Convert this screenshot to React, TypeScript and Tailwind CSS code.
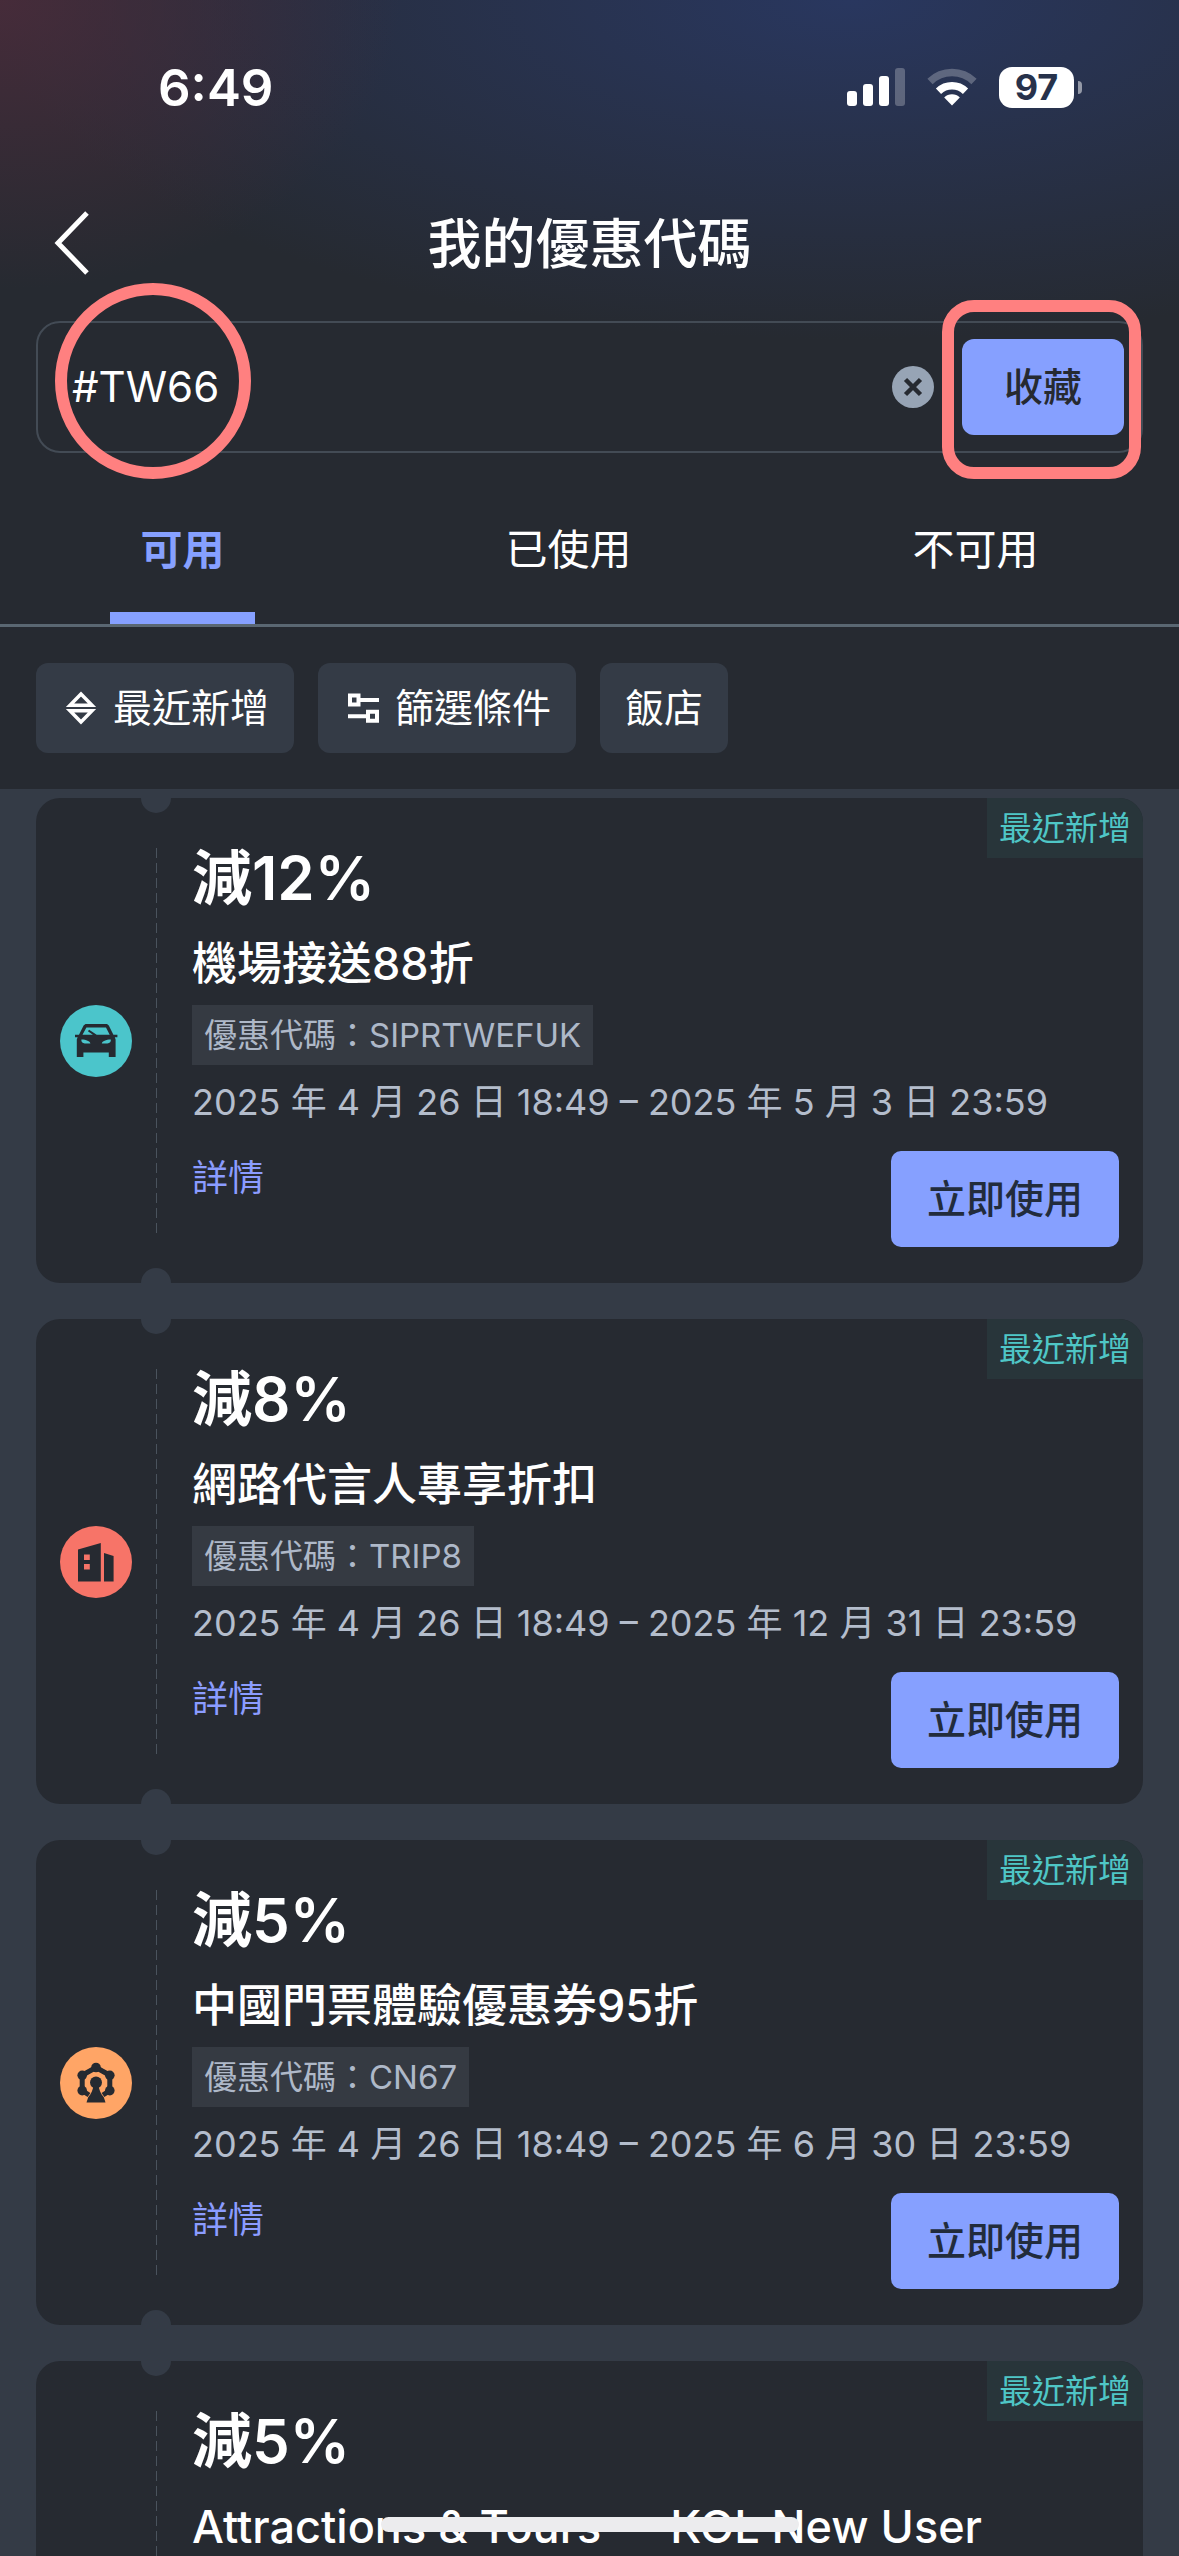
import type { ReactNode } from 'react'
import { clsx } from 'clsx'

type CouponKind = 'car' | 'hotel' | 'attraction'

type Coupon = {
  id: number
  kind: CouponKind
  discount: string
  name: string
  code?: string
  period?: string
}

const coupons: Coupon[] = [
  {
    id: 1,
    kind: 'car',
    discount: '減12%',
    name: '機場接送88折',
    code: 'SIPRTWEFUK',
    period: '2025 年 4 月 26 日 18:49 – 2025 年 5 月 3 日 23:59',
  },
  {
    id: 2,
    kind: 'hotel',
    discount: '減8%',
    name: '網路代言人專享折扣',
    code: 'TRIP8',
    period: '2025 年 4 月 26 日 18:49 – 2025 年 12 月 31 日 23:59',
  },
  {
    id: 3,
    kind: 'attraction',
    discount: '減5%',
    name: '中國門票體驗優惠券95折',
    code: 'CN67',
    period: '2025 年 4 月 26 日 18:49 – 2025 年 6 月 30 日 23:59',
  },
  {
    id: 4,
    kind: 'attraction',
    discount: '減5%',
    name: 'Attractions & Tours — KOL New User',
  },
]

const tabs = ['可用', '已使用', '不可用']

function CarIcon() {
  return (
    <svg viewBox="0 0 72 72" className="size-full" fill="#262a31">
      <path
        fillRule="evenodd"
        d="M25.5 19h21.5l1.8 1.6 4.6 9.2h4v2.4h-2.6l.8 2.2V52h-6.8v-4.6H23.4V52h-6.6V34.4l.8-2.2H15v-2.4h4l4.6-9.2zM26.4 22.4l-3.9 7.4h10.4l-5-3.6 1.2-1.4 7.6 5h13L46 22.4zM21.4 34.6c-.4 2.4 1 3.8 3.4 3.8h5.6c-.6-2-4-3.8-9-3.8zm29.4 0c-5 0-8.4 1.8-9 3.8h5.6c2.4 0 3.8-1.4 3.4-3.8z"
      />
    </svg>
  )
}

function HotelIcon() {
  return (
    <svg viewBox="0 0 72 72" className="size-full" fill="#262a31">
      <path
        fillRule="evenodd"
        d="M18 23.4 40.8 17v38.6H18zm6 5.2v5.4h5.8v-5.4zm0 9.4v5.4h5.8V38z"
      />
      <path d="m44 27 9.6 3v25.6H44z" />
    </svg>
  )
}

function WheelIcon() {
  return (
    <svg viewBox="0 0 72 72" className="size-full" fill="#262a31">
      <path
        d="M29 48l-6.8-4.4V28.3L36 20.5l13.8 7.8v15.3L43 48"
        fill="none"
        stroke="#262a31"
        strokeWidth="5"
        strokeLinejoin="round"
      />
      <circle cx="36" cy="20.5" r="4.8" />
      <circle cx="49.8" cy="28.3" r="4.8" />
      <circle cx="49.8" cy="43.6" r="4.8" />
      <circle cx="22.2" cy="28.3" r="4.8" />
      <circle cx="22.2" cy="43.6" r="4.8" />
      <circle cx="36" cy="35.5" r="6" />
      <path d="M33.5 38h5c.6 5 2 8.600 5.300 12.200l1.700 5.300h-19l1.700-5.300c3.300-3.600 4.700-7.200 5.300-12.200z" />
    </svg>
  )
}

const kinds: Record<CouponKind, { color: string; icon: ReactNode }> = {
  car: { color: 'bg-[#4bc5cb]', icon: <CarIcon /> },
  hotel: { color: 'bg-[#f77468]', icon: <HotelIcon /> },
  attraction: { color: 'bg-[#ffa566]', icon: <WheelIcon /> },
}

function StatusBar() {
  return (
    <div className="flex h-[174px] items-center justify-between pr-[97px] pl-[158px]">
      <span className="text-[51px] leading-none font-semibold">6:49</span>
      <div className="flex items-center gap-[22px]">
        <svg viewBox="0 0 58 38" className="h-[38px] w-[58px]" fill="#fff">
          <rect x="0" y="23" width="10" height="15" rx="3" />
          <rect x="16" y="16" width="10" height="22" rx="3" />
          <rect x="32" y="8" width="10" height="30" rx="3" />
          <rect x="48" y="0" width="10" height="38" rx="3" opacity="0.25" />
        </svg>
        <svg viewBox="0 0 50 38" className="h-[38px] w-[50px]" fill="none" stroke="#fff">
          <path d="M3 13.5a31.5 31.5 0 0 1 44 0" strokeWidth="7.5" opacity="0.25" />
          <path d="M11.5 23.2a19.5 19.5 0 0 1 27 0" strokeWidth="7.5" />
          <path d="M25 37.5 17.2 29.6a11 11 0 0 1 15.6 0z" fill="#fff" stroke="none" />
        </svg>
        <div className="flex items-center gap-[4px]">
          <span className="flex h-[41px] w-[75px] items-center justify-center rounded-[13px] bg-white text-[36px] leading-none font-bold text-[#27324b]">
            97
          </span>
          <span className="h-[13px] w-[4px] rounded-r-full bg-white/50" />
        </div>
      </div>
    </div>
  )
}

function Header() {
  return (
    <div className="grid h-[138px] grid-cols-[1fr_auto_1fr] items-center px-[54px]">
      <button type="button" aria-label="返回" className="justify-self-start">
        <svg viewBox="0 0 36 64" className="h-[64px] w-[36px]" fill="none" stroke="#fff" strokeWidth="5">
          <path d="M33 2 4 32l29 30" />
        </svg>
      </button>
      <h1 className="pt-[4px] text-[54px] leading-[72px] font-medium">我的優惠代碼</h1>
    </div>
  )
}

function CodeForm() {
  return (
    <form
      className="relative mx-[36px] mt-[9px] flex h-[132px] items-center rounded-[24px] border-2 border-[#434b55] pr-[17px] pl-[34px]"
      onSubmit={(e) => e.preventDefault()}
    >
      <input
        type="text"
        aria-label="優惠代碼"
        defaultValue="#TW66"
        className="min-w-0 flex-1 bg-transparent text-[42px] leading-[54px] outline-none"
      />
      <button type="reset" aria-label="清除" className="mr-[28px] size-[42px] rounded-full bg-[#97a4b5]">
        <svg viewBox="0 0 42 42" className="size-full" fill="none" stroke="#262a31" strokeWidth="4.5">
          <path d="m13.5 13.5 15 15m0-15-15 15" />
        </svg>
      </button>
      <button
        type="submit"
        className="h-[96px] w-[162px] rounded-[12px] bg-[#86a0ff] text-[39px] leading-[54px] font-medium text-[#262a31]"
      >
        收藏
      </button>
      {/* marker rings over the code and the save button */}
      <span className="pointer-events-none absolute top-[-40px] left-[17px] size-[196px] rounded-full border-[12px] border-[#ff8080]" />
      <span className="pointer-events-none absolute top-[-23px] right-0 h-[179px] w-[199px] rounded-[32px] border-[12px] border-[#ff8080]" />
    </form>
  )
}

function Tabs() {
  return (
    <div role="tablist" className="mt-[48px] flex border-b-3 border-[#5a6772]">
      {tabs.map((tab, i) => (
        <button
          key={tab}
          type="button"
          role="tab"
          aria-selected={i === 0}
          className={clsx(
            'flex h-[123px] flex-auto flex-col items-center justify-between pt-[22px] text-[42px] leading-[54px]',
            i === 0 && 'font-bold text-[#86a0ff]',
          )}
        >
          {tab}
          {i === 0 && <span className="-mx-[40px] h-[12px] w-[145px] bg-[#86a0ff]" />}
        </button>
      ))}
    </div>
  )
}

function Chip({ icon, children }: { icon?: ReactNode; children: ReactNode }) {
  return (
    <button
      type="button"
      className="flex h-[90px] items-center gap-[12px] rounded-[12px] bg-[#343b46] px-[25px] text-[39px] leading-[54px]"
    >
      {icon}
      {children}
    </button>
  )
}

function Filters() {
  return (
    <div className="flex gap-[24px] px-[36px] py-[36px]">
      <Chip
        icon={
          <svg viewBox="0 0 40 40" className="size-[40px]" fill="none" stroke="#fff" strokeWidth="3.5">
            <path d="M20 6 9 17.3h22zM20 34 9 22.7h22z" />
          </svg>
        }
      >
        最近新增
      </Chip>
      <Chip
        icon={
          <svg viewBox="0 0 40 40" className="size-[40px]" fill="none" stroke="#fff" strokeWidth="4">
            <path d="M7 7.500h8.500v9H7zM15.500 12H36M25 23.700h9v9h-9zM25 28.200H5" />
          </svg>
        }
      >
        篩選條件
      </Chip>
      <Chip>飯店</Chip>
    </div>
  )
}

function CouponCard({ coupon }: { coupon: Coupon }) {
  const { color, icon } = kinds[coupon.kind]
  return (
    <li className="relative flex min-h-[485px] shrink-0 overflow-hidden rounded-[24px] bg-[#262a31]">
      <span className="absolute top-[-15px] left-[105px] size-[30px] rounded-full bg-[#343b46]" />
      <span className="absolute bottom-[-15px] left-[105px] size-[30px] rounded-full bg-[#343b46]" />
      <span className="absolute top-0 right-0 bg-[#28353a] px-[12px] text-[33px] leading-[60px] text-[#4fc6c6]">
        最近新增
      </span>

      <div className="flex w-[120px] shrink-0 items-center pl-[24px]">
        <span className={clsx('size-[72px] rounded-full', color)}>{icon}</span>
      </div>
      <div className="my-[50px] w-px shrink-0 bg-[repeating-linear-gradient(to_bottom,#4a535d_0_10px,transparent_10px_15px)]" />

      <div className="min-w-0 flex-1 pt-[44px] pr-[24px] pb-[36px] pl-[35px]">
        <h2 className="text-[60px] leading-[72px] font-semibold">{coupon.discount}</h2>
        <p className="mt-[18px] text-[45px] leading-[63px] font-medium">{coupon.name}</p>
        {coupon.code && (
          <p className="mt-[10px] w-fit bg-[#353a42] px-[12px] text-[33px] leading-[60px] text-[#aeb8c8]">
            優惠代碼：{coupon.code}
          </p>
        )}
        {coupon.period && (
          <>
            <p className="mt-[10px] text-[36px] leading-[54px] whitespace-nowrap text-[#b4bdcc]">{coupon.period}</p>
            <div className="mt-[22px] flex items-start justify-between">
              <a href="#detail" className="text-[36px] leading-[54px] text-[#8b9cff]">
                詳情
              </a>
              <button
                type="button"
                className="h-[96px] rounded-[10px] bg-[#86a0ff] px-[36px] text-[39px] leading-[54px] font-medium text-[#222c3c]"
              >
                立即使用
              </button>
            </div>
          </>
        )}
      </div>
    </li>
  )
}

export default function App() {
  return (
    <div className="flex h-screen flex-col overflow-hidden bg-[#343b46] font-['Inter','Noto_Sans_CJK_TC',sans-serif] text-white">
      <header className="shrink-0 bg-[#262a31] bg-[radial-gradient(ellipse_400px_290px_at_0_0,#4e2c3ccc,transparent),radial-gradient(ellipse_860px_340px_at_850px_0,#29375f,transparent)] bg-no-repeat">
        <StatusBar />
        <Header />
        <CodeForm />
        <Tabs />
        <Filters />
      </header>

      <ul className="flex min-h-0 flex-1 flex-col gap-[36px] overflow-hidden px-[36px] pt-[9px]">
        {coupons.map((coupon) => (
          <CouponCard key={coupon.id} coupon={coupon} />
        ))}
      </ul>

      <div className="fixed bottom-[24px] left-1/2 h-[15px] w-[418px] -translate-x-1/2 rounded-full bg-[#ececee]" />
    </div>
  )
}
